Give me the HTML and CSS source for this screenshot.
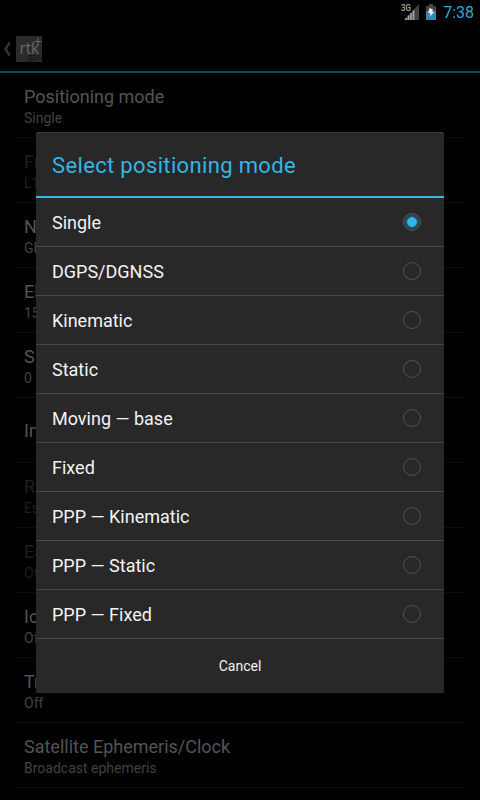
FILE: index.html
```html
<!DOCTYPE html>
<html lang="en">
<head>
<meta charset="utf-8">
<title>Positioning mode</title>
<link rel="stylesheet" href="styles.css">
</head>
<body>
<div class="statusbar">
  <svg class="signal" width="19" height="18" viewBox="0 0 19 18">
    <path d="M18 1V17H3Z" fill="#414141"/>
    <path d="M5 15v2M7.5 12.5V17M10 10v7M12.5 7.5V17" stroke="#a8a8a8" stroke-width="1.6"/>
    <text class="network" x="0" y="8" textLength="10" lengthAdjust="spacingAndGlyphs">3G</text>
  </svg>
  <svg class="battery" width="10" height="16" viewBox="0 0 10 16">
    <path d="M0 2h3V0h4v2h3v5H0z" fill="#444"/>
    <path d="M0 7h10v9H0z" fill="#268eb5"/>
    <path d="M3.5 4L7 5.5 6.2 7.5 8 8.2 4 12.5 4.6 9.5 2.3 8.5z" fill="#eee"/>
  </svg>
  <span class="clock">7:38</span>
</div>
<div class="actionbar">
  <svg class="back" width="8" height="16" viewBox="0 0 8 16"><path d="M6.6 1.5L2.6 8l4 6.5" fill="none" stroke="#343434" stroke-width="2.4"/></svg>
  <svg class="logo" width="26" height="26" viewBox="0 0 26 26">
    <rect width="26" height="26" fill="#2b2b2b"/>
    <text class="logo-gps" x="11" y="24" textLength="15">gps</text>
    <text class="logo-rtk" x="3.5" y="18" textLength="19.5" lengthAdjust="spacingAndGlyphs">rtk</text>
    <path d="M22 2v7M18.5 5.5h7" stroke="#626262" stroke-width="1.2"/>
  </svg>
</div>
<div class="settings">
  <div class="pref"><div class="name">Positioning mode</div><div class="value">Single</div></div>
  <div class="pref off"><div class="name">Fr</div><div class="value">L1</div></div>
  <div class="pref"><div class="name">N</div><div class="value">GP</div></div>
  <div class="pref"><div class="name">El</div><div class="value">15</div></div>
  <div class="pref"><div class="name">S</div><div class="value">0</div></div>
  <div class="pref"><div class="name">In</div></div>
  <div class="pref off"><div class="name">R</div><div class="value">Es</div></div>
  <div class="pref off"><div class="name">Ea</div><div class="value">Of</div></div>
  <div class="pref"><div class="name">Io</div><div class="value">Of</div></div>
  <div class="pref"><div class="name">Tr</div><div class="value">Off</div></div>
  <div class="pref"><div class="name">Satellite Ephemeris/Clock</div><div class="value">Broadcast ephemeris</div></div>
</div>
<div class="dialog">
  <div class="title">Select positioning mode</div>
  <div class="option"><span>Single</span><i class="radio on"></i></div>
  <div class="option"><span>DGPS/DGNSS</span><i class="radio"></i></div>
  <div class="option"><span>Kinematic</span><i class="radio"></i></div>
  <div class="option"><span>Static</span><i class="radio"></i></div>
  <div class="option"><span>Moving — base</span><i class="radio"></i></div>
  <div class="option"><span>Fixed</span><i class="radio"></i></div>
  <div class="option"><span>PPP — Kinematic</span><i class="radio"></i></div>
  <div class="option"><span>PPP — Static</span><i class="radio"></i></div>
  <div class="option"><span>PPP — Fixed</span><i class="radio"></i></div>
  <div class="cancel">Cancel</div>
</div>
</body>
</html>
```
FILE: styles.css
```css
* { box-sizing: border-box; }
body {
  margin: 0;
  width: 480px;
  height: 800px;
  overflow: hidden;
  position: relative;
  background: #000;
  font-family: Roboto, sans-serif;
}
svg { display: block; }
.statusbar {
  height: 25px;
  display: flex;
  align-items: center;
  justify-content: flex-end;
  padding-right: 6px;
}
.signal { margin: 0 6px 1px 0; }
.network { font: 500 9px Roboto, sans-serif; fill: #aaa; }
.battery { margin: 0 7px 1px 0; }
.clock { font-size: 16px; color: #2fa9d6; line-height: 25px; }
.actionbar {
  height: 48px;
  display: flex;
  align-items: center;
  gap: 5px;
  padding: 2px 0 0 3px;
  border-bottom: 2px solid #114558;
}
.logo-rtk { font: 15.5px "Noto Sans", sans-serif; fill: #666; }
.logo-gps { font: 9px "Noto Sans", sans-serif; fill: #151515; }
.settings { padding: 0 16px; }
.pref {
  height: 65px;
  padding: 3px 8px 0;
  display: flex;
  flex-direction: column;
  justify-content: center;
  border-bottom: 1px solid #0c0c0c;
  color: #545454;
}
.pref .name:only-child { padding-bottom: 1px; }
.name { font-size: 18px; line-height: 22px; }
.value { font-size: 14px; line-height: 20px; color: #424242; }
.off .name, .off .value { color: #1c211c; }
.dialog {
  position: absolute;
  left: 36px;
  top: 132px;
  width: 408px;
  height: 561px;
  background: #282828;
  border-top: 1px solid #3b3b3b;
  border-bottom: 1px solid #303030;
  border-radius: 2px;
  color: #f3f3f3;
}
.title {
  height: 65px;
  padding: 0 16px;
  line-height: 65px;
  font-size: 22px;
  letter-spacing: 0.35px;
  color: #33b5e5;
  border-bottom: 2px solid #33b5e5;
}
.option {
  height: 49px;
  display: flex;
  align-items: center;
  justify-content: space-between;
  padding: 0 23px 0 16px;
  font-size: 18px;
  border-bottom: 1px solid #464646;
}
.radio {
  width: 18px;
  height: 18px;
  border: 1px solid #505050;
  border-radius: 50%;
}
.radio.on {
  border-color: #4b5559;
  background: radial-gradient(circle, #33b5e5 0 4.5px, #20617a 5px, #2b4049 7px, #30383b 9px);
}
.cancel {
  height: 53px;
  line-height: 54px;
  text-align: center;
  font-size: 14px;
}
```
